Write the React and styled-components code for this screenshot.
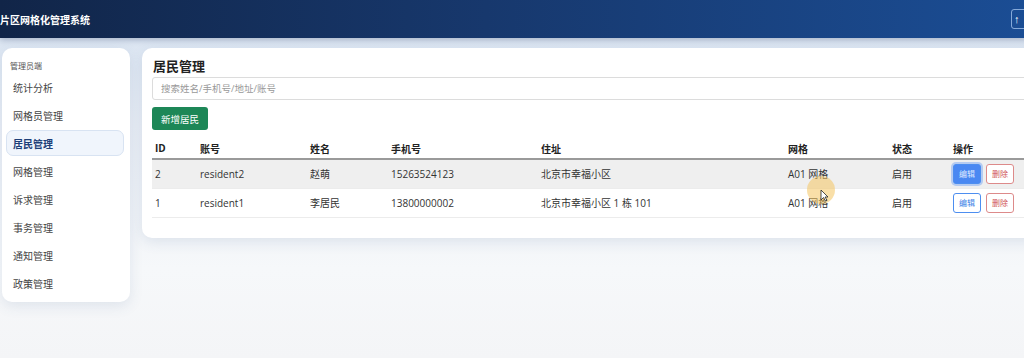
import React from 'react';
import styled, { createGlobalStyle } from 'styled-components';

const GlobalStyle = createGlobalStyle`
  html, body {
    margin: 0;
    padding: 0;
    overflow: hidden;
    font-family: "Open Sans", "Noto Sans CJK SC", sans-serif;
    background: #f4f6f9;
  }
  * { box-sizing: border-box; }
`;

const Page = styled.div`
  width: 1080px;
  height: 358px;
  background: linear-gradient(180deg, #d6e2f1 0%, #e9eef5 35%, #f6f8fa 75%, #f4f5f7 100%);
`;

const Header = styled.header`
  height: 38px;
  display: flex;
  align-items: center;
  justify-content: space-between;
  padding: 0 29px 0 0;
  background: linear-gradient(90deg, #112548 0%, #17386d 45%, #1b4f98 100%);
  box-shadow: 0 2px 6px rgba(15, 37, 80, 0.25);
`;

const Title = styled.h1`
  margin: 0;
  font-size: 10px;
  font-weight: 700;
  color: #fff;
`;

const TopButton = styled.button`
  width: 40px;
  height: 20px;
  border: 1px solid rgba(170, 200, 240, 0.75);
  border-radius: 3px;
  background: transparent;
  color: #fff;
  font-size: 11px;
  text-align: left;
  padding: 0 0 0 2px;
`;

const Body = styled.div`
  display: flex;
  align-items: flex-start;
  gap: 12px;
  padding: 10px 0 0 2px;
`;

const Sidebar = styled.nav`
  width: 128px;
  background: #fff;
  border-radius: 10px;
  box-shadow: 0 4px 14px rgba(60, 90, 140, 0.12);
  padding: 12px 6px 4px 4px;
`;

const SideLabel = styled.div`
  font-size: 8px;
  color: #555;
  padding-left: 4px;
  margin-bottom: 3px;
`;

const SideItem = styled.div`
  height: 26px;
  margin-bottom: 2px;
  display: flex;
  align-items: center;
  padding-left: 6px;
  font-size: 10px;
  border-radius: 7px;
  color: ${(p) => (p.$active ? '#1d3f78' : '#444')};
  font-weight: ${(p) => (p.$active ? 700 : 400)};
  background: ${(p) => (p.$active ? '#f0f5fc' : 'transparent')};
  border: 1px solid ${(p) => (p.$active ? '#d8e3f2' : 'transparent')};
`;

const Main = styled.main`
  position: relative;
  width: 920px;
  background: #fff;
  border-radius: 10px;
  box-shadow: 0 4px 14px rgba(60, 90, 140, 0.12);
  padding: 9px 0 20px 10px;
`;

const MainTitle = styled.h2`
  margin: 0 0 1px 1px;
  font-size: 13px;
  line-height: 19px;
  font-weight: 700;
  color: #222;
`;

const Search = styled.input`
  display: block;
  width: 100%;
  height: 23px;
  border: 1px solid #dcdcdc;
  border-radius: 3px;
  padding: 0 8px;
  font-size: 9.5px;
  font-family: inherit;
  outline: none;
  &::placeholder { color: #999; }
`;

const AddButton = styled.button`
  margin-top: 7px;
  height: 23px;
  padding: 0 9px;
  border: none;
  border-radius: 3px;
  background: #1d8757;
  color: #fff;
  font-size: 9.5px;
  font-family: inherit;
`;

const Table = styled.table`
  margin-top: 8px;
  width: 890px;
  border-collapse: collapse;
  table-layout: fixed;
  font-size: 10px;
  color: #333;
`;

const Th = styled.th`
  text-align: left;
  font-weight: 700;
  height: 21px;
  padding: 0 3px;
  border-bottom: 2px solid #9a9a9a;
  color: #222;
`;

const Tr = styled.tr`
  background: ${(p) => (p.$hover ? '#efefef' : '#fff')};
  border-bottom: 1px solid #ececec;
`;

const Td = styled.td`
  height: 29px;
  padding: 0 3px;
  white-space: nowrap;
`;

const SmallButton = styled.button`
  width: 28px;
  height: 20px;
  margin-right: 5px;
  border-radius: 3px;
  font-size: 8px;
  font-family: inherit;
  padding: 0;
  border: 1px solid ${(p) => (p.$danger ? '#dd8a8a' : '#4d8ef0')};
  color: ${(p) => (p.$danger ? '#d05555' : p.$filled ? '#dde8ff' : '#3d7fe6')};
  background: ${(p) => (p.$filled ? '#4a88f2' : '#fff')};
  box-shadow: ${(p) => (p.$filled ? '0 0 0 2px rgba(110, 160, 245, 0.45)' : 'none')};
`;

const CursorMark = styled.div`
  position: absolute;
  left: 665px;
  top: 128px;
  width: 28px;
  height: 28px;
  border-radius: 50%;
  background: rgba(244, 196, 96, 0.55);
  pointer-events: none;
`;

const CursorArrow = styled.svg`
  position: absolute;
  left: 678px;
  top: 141px;
  pointer-events: none;
`;

const menu = ['统计分析', '网格员管理', '居民管理', '网格管理', '诉求管理', '事务管理', '通知管理', '政策管理'];

const residents = [
  { id: 2, account: 'resident2', name: '赵萌', phone: '15263524123', address: '北京市幸福小区', grid: 'A01 网格', status: '启用' },
  { id: 1, account: 'resident1', name: '李居民', phone: '13800000002', address: '北京市幸福小区 1 栋 101', grid: 'A01 网格', status: '启用' },
];

export default function App() {
  return (
    <>
      <GlobalStyle />
      <Page>
        <Header>
          <Title>片区网格化管理系统</Title>
          <TopButton>↑</TopButton>
        </Header>
        <Body>
          <Sidebar>
            <SideLabel>管理员端</SideLabel>
            {menu.map((m) => (
              <SideItem key={m} $active={m === '居民管理'}>{m}</SideItem>
            ))}
          </Sidebar>
          <Main>
            <MainTitle>居民管理</MainTitle>
            <Search placeholder="搜索姓名/手机号/地址/账号" />
            <AddButton>新增居民</AddButton>
            <Table>
              <colgroup>
                <col style={{ width: 45 }} />
                <col style={{ width: 110 }} />
                <col style={{ width: 81 }} />
                <col style={{ width: 150 }} />
                <col style={{ width: 247 }} />
                <col style={{ width: 104 }} />
                <col style={{ width: 61 }} />
                <col style={{ width: 92 }} />
              </colgroup>
              <thead>
                <tr>
                  <Th>ID</Th>
                  <Th>账号</Th>
                  <Th>姓名</Th>
                  <Th>手机号</Th>
                  <Th>住址</Th>
                  <Th>网格</Th>
                  <Th>状态</Th>
                  <Th>操作</Th>
                </tr>
              </thead>
              <tbody>
                {residents.map((r, i) => (
                  <Tr key={r.id} $hover={i === 0}>
                    <Td>{r.id}</Td>
                    <Td>{r.account}</Td>
                    <Td>{r.name}</Td>
                    <Td>{r.phone}</Td>
                    <Td>{r.address}</Td>
                    <Td>{r.grid}</Td>
                    <Td>{r.status}</Td>
                    <Td>
                      <SmallButton $filled={i === 0}>编辑</SmallButton>
                      <SmallButton $danger>删除</SmallButton>
                    </Td>
                  </Tr>
                ))}
              </tbody>
            </Table>
            <CursorMark />
            <CursorArrow width="9" height="13" viewBox="0 0 9 13">
              <path d="M1 1 L1 11 L3.5 8.5 L5.5 12 L7 11.3 L5 8 L8 8 Z" fill="#fff" stroke="#222" strokeWidth="0.8" />
            </CursorArrow>
          </Main>
        </Body>
      </Page>
    </>
  );
}
